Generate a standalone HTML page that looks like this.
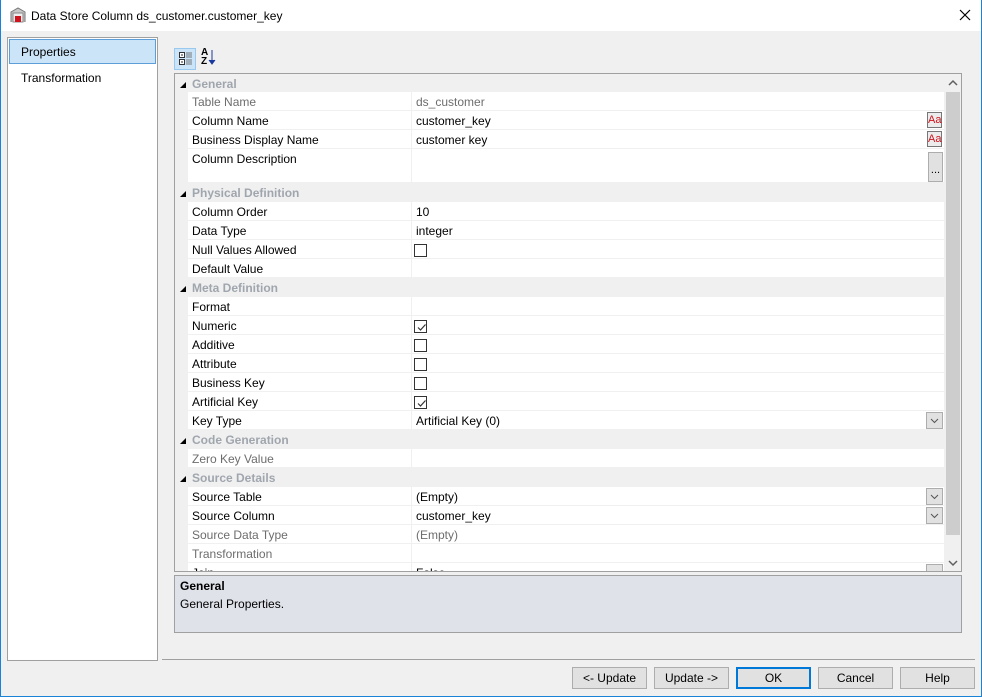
<!DOCTYPE html>
<html><head><meta charset="utf-8">
<style>
*{box-sizing:border-box;margin:0;padding:0}
body{width:982px;height:697px;overflow:hidden;background:#f0f0f0;font-family:"Liberation Sans",sans-serif;font-size:12px;color:#000;position:relative}
.a{position:absolute}
.win{left:0;top:0;width:982px;height:697px;border:1px solid #1883d7;border-top:none}
.title{left:0;top:0;width:982px;height:31px;background:#fff}
.lbl{position:absolute;left:188px;width:223px;height:19px;line-height:20px;padding-left:4px;background:#fff;border-bottom:1px solid #f0f0f0;white-space:nowrap}
.val{position:absolute;left:411px;width:533px;height:19px;line-height:20px;padding-left:4px;background:#fff;border-bottom:1px solid #f0f0f0;border-left:1px solid #f0f0f0;white-space:nowrap}
.hdr{position:absolute;left:175px;width:769px;height:19px;line-height:20px;background:#f0f0f0;color:#a0a6ae;font-weight:bold;padding-left:17px}
.hdr:before{content:"";position:absolute;left:5px;top:8px;border-left:6px solid transparent;border-bottom:6px solid #000}
.g{color:#6d6d6d}
.cb{position:absolute;left:414px;width:13px;height:13px;border:1px solid #333;background:#fff}
.cb svg{position:absolute;left:1px;top:1px}
.dd{position:absolute;left:926px;width:17px;height:17px;border:1px solid #adadad;background:#e1e1e1}
.btn{position:absolute;top:667px;width:75px;height:22px;border:1px solid #adadad;background:#e1e1e1;text-align:center;line-height:20px}
</style></head><body>
<div class="a title"></div>
<svg class="a" style="left:10px;top:7px" width="16" height="16" viewBox="0 0 16 16"><path d="M1 15V5L8 1l7 4v10" fill="#c8c8c8" stroke="#777"/><rect x="3" y="6" width="10" height="9" fill="#eee" stroke="#888"/><rect x="5" y="9" width="6" height="6" fill="#d0141e"/></svg>
<div class="a" style="left:31px;top:9px;font-size:12px">Data Store Column ds_customer.customer_key</div>
<svg class="a" style="left:959px;top:9px" width="12" height="12"><path d="M1 1L11 11M11 1L1 11" stroke="#000" stroke-width="1.2"/></svg>
<div class="a win"></div>

<div class="a" style="left:7px;top:37px;width:151px;height:624px;background:#fff;border:1px solid #a0a0a0"></div>
<div class="a" style="left:9px;top:39px;width:147px;height:25px;background:#cce4f7;border:1px solid #5d9ed8;line-height:24px;padding-left:11px">Properties</div>
<div class="a" style="left:21px;top:71px">Transformation</div>

<div class="a" style="left:174px;top:48px;width:22px;height:22px;background:#cce4f7;border:1px solid #99c9ef"></div>
<svg class="a" style="left:178px;top:51px" width="15" height="15"><rect x="1.5" y="1.5" width="5" height="5" fill="#fff" stroke="#333"/><rect x="1.5" y="8.5" width="5" height="5" fill="#fff" stroke="#333"/><path d="M3 4h2M4 3v2M3 11h2M4 10v2M8 2h6M8 4h6M8 6h6M8 9h6M8 11h6M8 13h6" stroke="#555" stroke-width="0.8"/></svg>
<div class="a" style="left:201px;top:48px;font-size:10px;line-height:9px;font-weight:bold">A<br>Z</div>
<svg class="a" style="left:208px;top:50px" width="8" height="16"><path d="M4 0v13M1 10l3 4 3-4" stroke="#1b3aa0" fill="#1b3aa0"/></svg>

<div class="a" style="left:174px;top:73px;width:788px;height:499px;border:1px solid #a0a0a0;background:#f0f0f0;overflow:hidden">
</div>
<div class="a" style="left:175px;top:74px;width:770px;height:497px;overflow:hidden">
<div style="position:absolute;left:-175px;top:-74px;width:982px;height:697px">
<div class="hdr" style="top:74px">General</div>
<div class="lbl g" style="top:92px">Table Name</div><div class="val g" style="top:92px">ds_customer</div>
<div class="lbl" style="top:111px">Column Name</div><div class="val" style="top:111px">customer_key</div>
<div class="lbl" style="top:130px">Business Display Name</div><div class="val" style="top:130px">customer key</div>
<div class="lbl" style="top:149px;height:34px">Column Description</div><div class="val" style="top:149px;height:34px"></div>
<div class="hdr" style="top:183px">Physical Definition</div>
<div class="lbl" style="top:202px">Column Order</div><div class="val" style="top:202px">10</div>
<div class="lbl" style="top:221px">Data Type</div><div class="val" style="top:221px">integer</div>
<div class="lbl" style="top:240px">Null Values Allowed</div><div class="val" style="top:240px"></div>
<div class="lbl" style="top:259px">Default Value</div><div class="val" style="top:259px"></div>
<div class="hdr" style="top:278px">Meta Definition</div>
<div class="lbl" style="top:297px">Format</div><div class="val" style="top:297px"></div>
<div class="lbl" style="top:316px">Numeric</div><div class="val" style="top:316px"></div>
<div class="lbl" style="top:335px">Additive</div><div class="val" style="top:335px"></div>
<div class="lbl" style="top:354px">Attribute</div><div class="val" style="top:354px"></div>
<div class="lbl" style="top:373px">Business Key</div><div class="val" style="top:373px"></div>
<div class="lbl" style="top:392px">Artificial Key</div><div class="val" style="top:392px"></div>
<div class="lbl" style="top:411px">Key Type</div><div class="val" style="top:411px">Artificial Key (0)</div>
<div class="hdr" style="top:430px">Code Generation</div>
<div class="lbl g" style="top:449px">Zero Key Value</div><div class="val" style="top:449px"></div>
<div class="hdr" style="top:468px">Source Details</div>
<div class="lbl" style="top:487px">Source Table</div><div class="val" style="top:487px">(Empty)</div>
<div class="lbl" style="top:506px">Source Column</div><div class="val" style="top:506px">customer_key</div>
<div class="lbl g" style="top:525px">Source Data Type</div><div class="val g" style="top:525px">(Empty)</div>
<div class="lbl g" style="top:544px">Transformation</div><div class="val" style="top:544px"></div>
<div class="lbl" style="top:563px">Join</div><div class="val" style="top:563px">False</div>

<div class="cb" style="top:244px"></div>
<div class="cb" style="top:320px"><svg width="11" height="11"><path d="M2 5.5l2.5 2.5L9.5 2.5" stroke="#333" fill="none" stroke-width="1.2"/></svg></div>
<div class="cb" style="top:339px"></div>
<div class="cb" style="top:358px"></div>
<div class="cb" style="top:377px"></div>
<div class="cb" style="top:396px"><svg width="11" height="11"><path d="M2 5.5l2.5 2.5L9.5 2.5" stroke="#333" fill="none" stroke-width="1.2"/></svg></div>

<div class="a" style="left:927px;top:112px;width:15px;height:16px;border:1px solid #777;background:#ececec;color:#d0141e;font-size:11px;line-height:14px;text-align:center">Aa</div>
<div class="a" style="left:927px;top:131px;width:15px;height:16px;border:1px solid #777;background:#ececec;color:#d0141e;font-size:11px;line-height:14px;text-align:center">Aa</div>
<div class="a" style="left:928px;top:152px;width:15px;height:30px;border:1px solid #adadad;background:#e1e1e1;font-size:11px;line-height:34px;text-align:center">...</div>
<div class="dd" style="top:412px"><svg width="15" height="15"><path d="M4 6l3.5 3.5L11 6" stroke="#555" fill="none"/></svg></div>
<div class="dd" style="top:488px"><svg width="15" height="15"><path d="M4 6l3.5 3.5L11 6" stroke="#555" fill="none"/></svg></div>
<div class="dd" style="top:507px"><svg width="15" height="15"><path d="M4 6l3.5 3.5L11 6" stroke="#555" fill="none"/></svg></div>
<div class="dd" style="top:564px"></div>
</div></div>
<div class="a" style="left:945px;top:74px;width:16px;height:497px;background:#f0f0f0"></div>
<div class="a" style="left:946px;top:92px;width:14px;height:443px;background:#cdcdcd"></div>
<svg class="a" style="left:946px;top:77px" width="14" height="12"><path d="M3 8l4-4 4 4" stroke="#606060" fill="none" stroke-width="1.5"/></svg>
<svg class="a" style="left:946px;top:557px" width="14" height="12"><path d="M3 4l4 4 4-4" stroke="#606060" fill="none" stroke-width="1.5"/></svg>

<div class="a" style="left:174px;top:575px;width:788px;height:58px;background:#dfe2e9;border:1px solid #a0a0a0;padding:1px 5px;line-height:18px"><b>General</b><br>General Properties.</div>

<div class="a" style="left:162px;top:659px;width:813px;height:1px;background:#a0a0a0"></div>
<div class="btn" style="left:572px">&lt;- Update</div>
<div class="btn" style="left:654px">Update -&gt;</div>
<div class="btn" style="left:736px;border:2px solid #0078d7;line-height:18px">OK</div>
<div class="btn" style="left:818px">Cancel</div>
<div class="btn" style="left:900px">Help</div>
</body></html>
